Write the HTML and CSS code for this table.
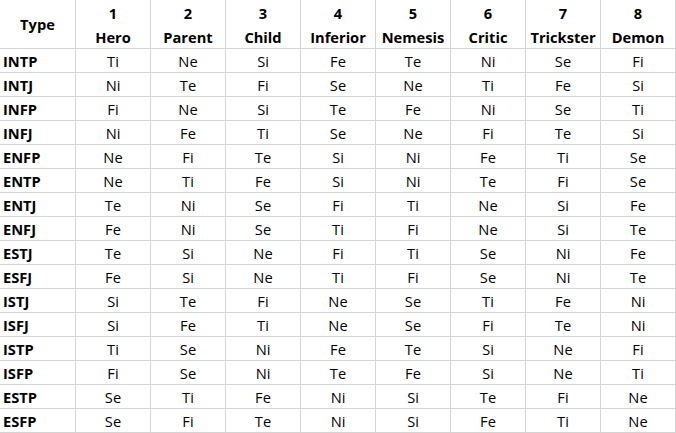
FILE: index.html
```html
<!DOCTYPE html>
<html>
<head>
<meta charset="utf-8">
<link rel="stylesheet" href="styles.css">
</head>
<body>
<div class="sheet" id="sheet">
  <div class="cell head type">Type</div>
  <div class="cell head">1<br>Hero</div>
  <div class="cell head">2<br>Parent</div>
  <div class="cell head">3<br>Child</div>
  <div class="cell head">4<br>Inferior</div>
  <div class="cell head">5<br>Nemesis</div>
  <div class="cell head">6<br>Critic</div>
  <div class="cell head">7<br>Trickster</div>
  <div class="cell head">8<br>Demon</div>

  <div class="cell name">INTP</div><div class="cell">Ti</div><div class="cell">Ne</div><div class="cell">Si</div><div class="cell">Fe</div><div class="cell">Te</div><div class="cell">Ni</div><div class="cell">Se</div><div class="cell">Fi</div>
  <div class="cell name">INTJ</div><div class="cell">Ni</div><div class="cell">Te</div><div class="cell">Fi</div><div class="cell">Se</div><div class="cell">Ne</div><div class="cell">Ti</div><div class="cell">Fe</div><div class="cell">Si</div>
  <div class="cell name">INFP</div><div class="cell">Fi</div><div class="cell">Ne</div><div class="cell">Si</div><div class="cell">Te</div><div class="cell">Fe</div><div class="cell">Ni</div><div class="cell">Se</div><div class="cell">Ti</div>
  <div class="cell name">INFJ</div><div class="cell">Ni</div><div class="cell">Fe</div><div class="cell">Ti</div><div class="cell">Se</div><div class="cell">Ne</div><div class="cell">Fi</div><div class="cell">Te</div><div class="cell">Si</div>
  <div class="cell name">ENFP</div><div class="cell">Ne</div><div class="cell">Fi</div><div class="cell">Te</div><div class="cell">Si</div><div class="cell">Ni</div><div class="cell">Fe</div><div class="cell">Ti</div><div class="cell">Se</div>
  <div class="cell name">ENTP</div><div class="cell">Ne</div><div class="cell">Ti</div><div class="cell">Fe</div><div class="cell">Si</div><div class="cell">Ni</div><div class="cell">Te</div><div class="cell">Fi</div><div class="cell">Se</div>
  <div class="cell name">ENTJ</div><div class="cell">Te</div><div class="cell">Ni</div><div class="cell">Se</div><div class="cell">Fi</div><div class="cell">Ti</div><div class="cell">Ne</div><div class="cell">Si</div><div class="cell">Fe</div>
  <div class="cell name">ENFJ</div><div class="cell">Fe</div><div class="cell">Ni</div><div class="cell">Se</div><div class="cell">Ti</div><div class="cell">Fi</div><div class="cell">Ne</div><div class="cell">Si</div><div class="cell">Te</div>
  <div class="cell name">ESTJ</div><div class="cell">Te</div><div class="cell">Si</div><div class="cell">Ne</div><div class="cell">Fi</div><div class="cell">Ti</div><div class="cell">Se</div><div class="cell">Ni</div><div class="cell">Fe</div>
  <div class="cell name">ESFJ</div><div class="cell">Fe</div><div class="cell">Si</div><div class="cell">Ne</div><div class="cell">Ti</div><div class="cell">Fi</div><div class="cell">Se</div><div class="cell">Ni</div><div class="cell">Te</div>
  <div class="cell name">ISTJ</div><div class="cell">Si</div><div class="cell">Te</div><div class="cell">Fi</div><div class="cell">Ne</div><div class="cell">Se</div><div class="cell">Ti</div><div class="cell">Fe</div><div class="cell">Ni</div>
  <div class="cell name">ISFJ</div><div class="cell">Si</div><div class="cell">Fe</div><div class="cell">Ti</div><div class="cell">Ne</div><div class="cell">Se</div><div class="cell">Fi</div><div class="cell">Te</div><div class="cell">Ni</div>
  <div class="cell name">ISTP</div><div class="cell">Ti</div><div class="cell">Se</div><div class="cell">Ni</div><div class="cell">Fe</div><div class="cell">Te</div><div class="cell">Si</div><div class="cell">Ne</div><div class="cell">Fi</div>
  <div class="cell name">ISFP</div><div class="cell">Fi</div><div class="cell">Se</div><div class="cell">Ni</div><div class="cell">Te</div><div class="cell">Fe</div><div class="cell">Si</div><div class="cell">Ne</div><div class="cell">Ti</div>
  <div class="cell name">ESTP</div><div class="cell">Se</div><div class="cell">Ti</div><div class="cell">Fe</div><div class="cell">Ni</div><div class="cell">Si</div><div class="cell">Te</div><div class="cell">Fi</div><div class="cell">Ne</div>
  <div class="cell name">ESFP</div><div class="cell">Se</div><div class="cell">Fi</div><div class="cell">Te</div><div class="cell">Ni</div><div class="cell">Si</div><div class="cell">Fe</div><div class="cell">Ti</div><div class="cell">Ne</div>
</div>
</body>
</html>
```
FILE: styles.css
```css
html, body {
  margin: 0;
  padding: 0;
  background: #ffffff;
}

body {
  overflow: hidden;
}

.sheet {
  display: grid;
  grid-template-columns: 75px repeat(8, 74px);
  grid-template-rows: 48px repeat(16, 23px);
  gap: 1px;
  padding: 1px;
  margin: -1px 0 0 -1px;
  width: max-content;
  background: #d4d4d4;
  font-family: "Open Sans", "Noto Sans", sans-serif;
  font-size: 14.67px;
  color: #000000;
}

.cell {
  box-sizing: border-box;
  background: #ffffff;
  text-align: center;
  line-height: 23px;
  padding-top: 1px;
  white-space: nowrap;
  overflow: visible;
}

.name {
  text-align: left;
  font-weight: 700;
  padding-left: 3px;
}

.head {
  font-weight: 700;
  line-height: 23.5px;
  padding-top: 2px;
}

.head.type {
  line-height: 47px;
  padding-top: 1px;
}
```
